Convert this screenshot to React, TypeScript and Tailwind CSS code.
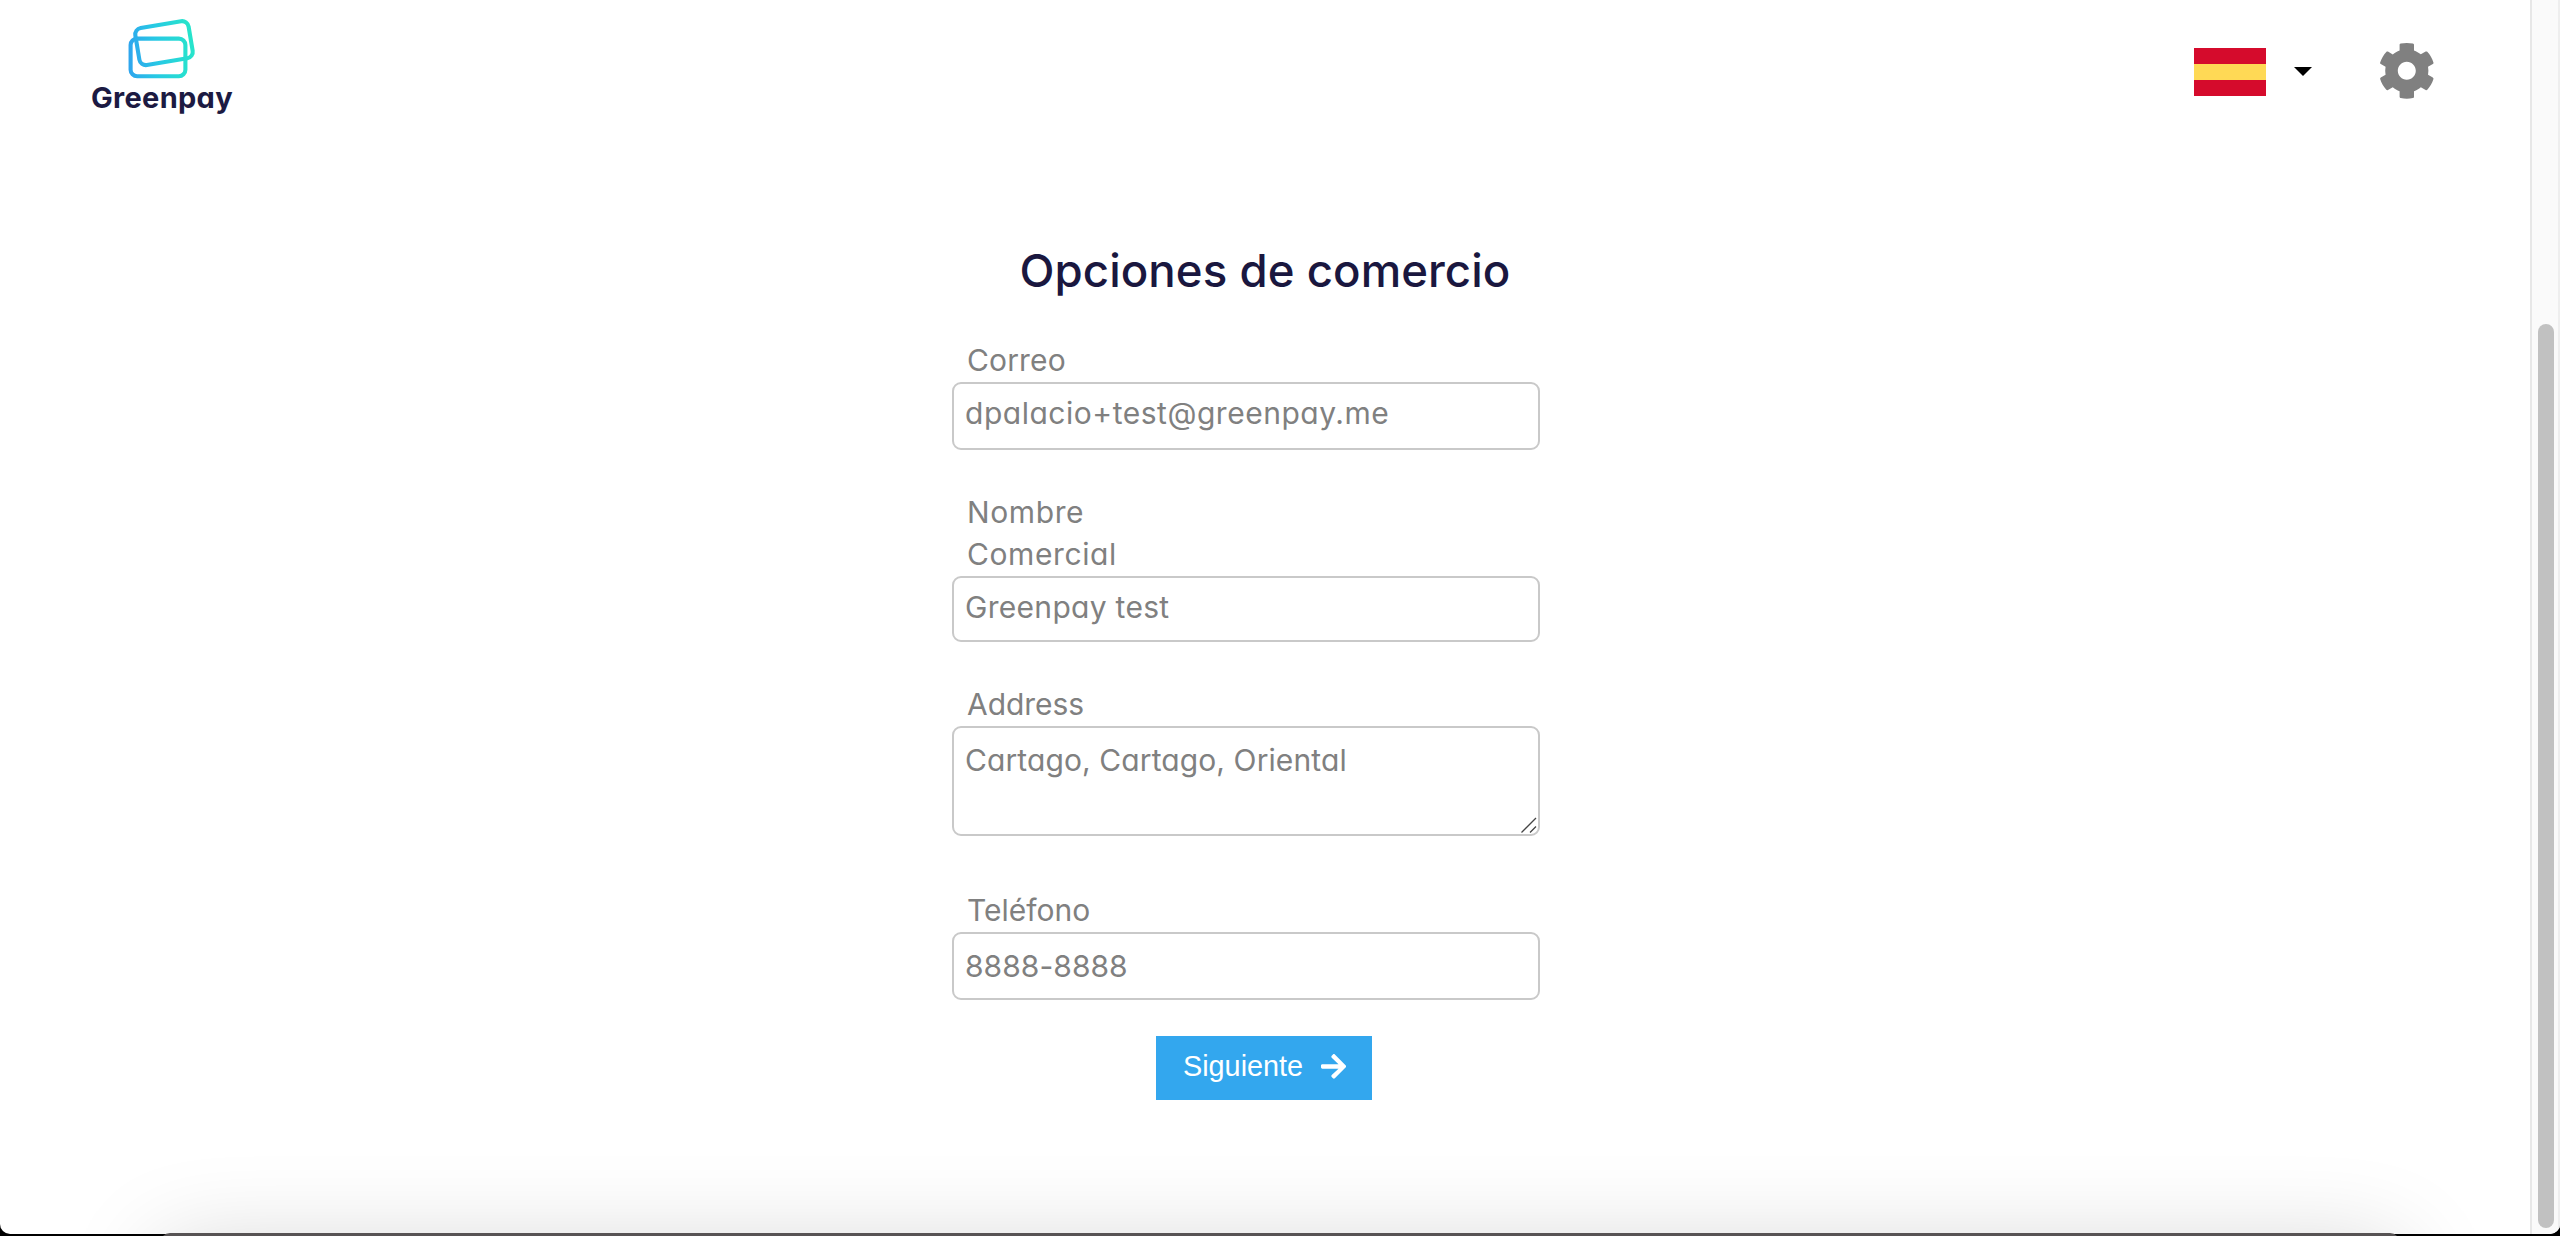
import { useState } from "react";
import { FaArrowRight, FaCog } from "react-icons/fa";

interface Field {
  id: string;
  label: string;
  value: string;
  multiline?: boolean;
  wrapperClass: string;
  labelClass: string;
  inputClass: string;
}

const fields: Field[] = [
  {
    id: "email",
    label: "Correo",
    value: "dpalacio+test@greenpay.me",
    wrapperClass: "mt-[38px]",
    labelClass: "tracking-[0.15px]",
    inputClass: "h-[68px] pb-[6px] tracking-[0.52px]",
  },
  {
    id: "name",
    label: "Nombre Comercial",
    value: "Greenpay test",
    wrapperClass: "mt-[41px]",
    labelClass: "tracking-[0.6px]",
    inputClass: "h-[66px] pb-[4px] tracking-[0.3px]",
  },
  {
    id: "address",
    label: "Address",
    value: "Cartago, Cartago, Oriental",
    multiline: true,
    wrapperClass: "mt-[41px]",
    labelClass: "tracking-[-0.05px]",
    inputClass: "h-[110px] pt-[11px] leading-[42px] tracking-[0.1px]",
  },
  {
    id: "phone",
    label: "Teléfono",
    value: "8888-8888",
    wrapperClass: "mt-[53px]",
    labelClass: "tracking-[0px]",
    inputClass: "h-[68px] pb-px tracking-[0.05px]",
  },
];

function Logo() {
  return (
    <div className="ml-[91px] flex w-[142px] flex-col items-center pt-4">
      <svg className="h-[64px] w-[72px]" viewBox="0 0 72 64" fill="none" strokeWidth="4.1">
        <defs>
          <linearGradient id="brand" gradientUnits="userSpaceOnUse" x1="2" y1="0" x2="64" y2="0">
            <stop offset="0" stopColor="#2fa4ee" />
            <stop offset="0.45" stopColor="#27c9e4" />
            <stop offset="1" stopColor="#27e3cc" />
          </linearGradient>
        </defs>
        <rect x="4.6" y="22.6" width="54.8" height="37.6" rx="6.5" stroke="url(#brand)" />
        <rect
          x="11"
          y="8.3"
          width="54"
          height="37.6"
          rx="6.5"
          stroke="url(#brand)"
          transform="rotate(-9.5 38.2 27.1)"
        />
      </svg>
      <span className="text-[29px] leading-[36px] font-bold tracking-[0.3px] whitespace-nowrap text-[#1c1a42]">
        Greenpay
      </span>
    </div>
  );
}

function Header() {
  return (
    <header className="flex h-[140px] items-start justify-between pr-[94px]">
      <Logo />
      <div className="flex h-[140px] items-start">
        <div className="mt-12 flex h-12 w-[72px] flex-col">
          <div className="flex-1 bg-[#d50b2c]" />
          <div className="flex-1 bg-[#ffd955]" />
          <div className="flex-1 bg-[#d50b2c]" />
        </div>
        <svg className="mt-[67px] ml-7 h-[9px] w-[18px]" viewBox="0 0 18 9">
          <path d="M0 0h18L9 9z" fill="#000" />
        </svg>
        <FaCog className="mt-[41.5px] ml-[66px] size-[57.6px] text-[#808080]" />
      </div>
    </header>
  );
}

function FormField({ field }: { field: Field }) {
  const [value, setValue] = useState(field.value);

  return (
    <div className={`w-[588px] ${field.wrapperClass}`}>
      <label htmlFor={field.id} className={`ml-[15px] block w-[170px] leading-[42px] ${field.labelClass}`}>
        {field.label}
      </label>
      {field.multiline ? (
        <div className="relative mt-px">
          <textarea
            id={field.id}
            value={value}
            onChange={(e) => setValue(e.target.value)}
            className={`block w-full resize-none overflow-hidden rounded-[9px] border-2 border-[#c9c9c9] bg-white px-[11px] outline-none ${field.inputClass}`}
          />
          <svg className="absolute right-[3px] bottom-[3px] size-4" viewBox="0 0 16 16" stroke="#444" strokeWidth="1.3">
            <path d="M.5 15.5L15 1M9 15.5L15 9.5" />
          </svg>
        </div>
      ) : (
        <input
          id={field.id}
          value={value}
          onChange={(e) => setValue(e.target.value)}
          className={`mt-px block w-full rounded-[9px] border-2 border-[#c9c9c9] bg-white px-[11px] outline-none ${field.inputClass}`}
        />
      )}
    </div>
  );
}

export default function App() {
  return (
    <div className="relative h-[1236px] w-full overflow-hidden bg-black font-['Inter',sans-serif] [font-feature-settings:'cv11']">
      <div className="flex h-[1234px] overflow-hidden rounded-b-[10px] bg-white">
        <div className="flex-1">
          <Header />

          <main className="mx-auto w-[626px] pt-[101px] text-[30px] text-[#808080]">
            <h1 className="text-center text-[45.6px] leading-[60px] font-medium tracking-[0.05px] whitespace-nowrap text-[#1a173f]">
              Opciones de comercio
            </h1>

            {fields.map((field) => (
              <FormField key={field.id} field={field} />
            ))}

            <div className="mt-9 mr-0.5 flex justify-center">
              <button className="flex h-16 w-[216px] items-center bg-[#33a7ee] pb-[3px] pl-[27px] font-['Liberation_Sans',sans-serif] text-[28.8px] text-white">
                <span className="pt-px">Siguiente</span>
                <FaArrowRight className="-mt-px ml-[18px] h-[28.8px] w-[25.2px]" />
              </button>
            </div>
          </main>
        </div>

        {/* Scrollbar */}
        <div className="h-full w-[30px] border-r-2 border-l-2 border-r-[#eeeeee] border-l-[#e7e7e7] bg-[#fafafa] pt-[324px] pl-1.5">
          <div className="h-[904px] w-4 rounded-full bg-[#c1c1c1]" />
        </div>
      </div>

      {/* Window peeking from below */}
      <div className="absolute inset-x-0 bottom-0 h-[110px] overflow-hidden">
        <div className="absolute top-[107px] right-[160px] left-[160px] h-[200px] rounded-[10px] bg-[#575354] shadow-[0_16px_96px_rgba(0,0,0,0.18)]" />
      </div>
    </div>
  );
}
